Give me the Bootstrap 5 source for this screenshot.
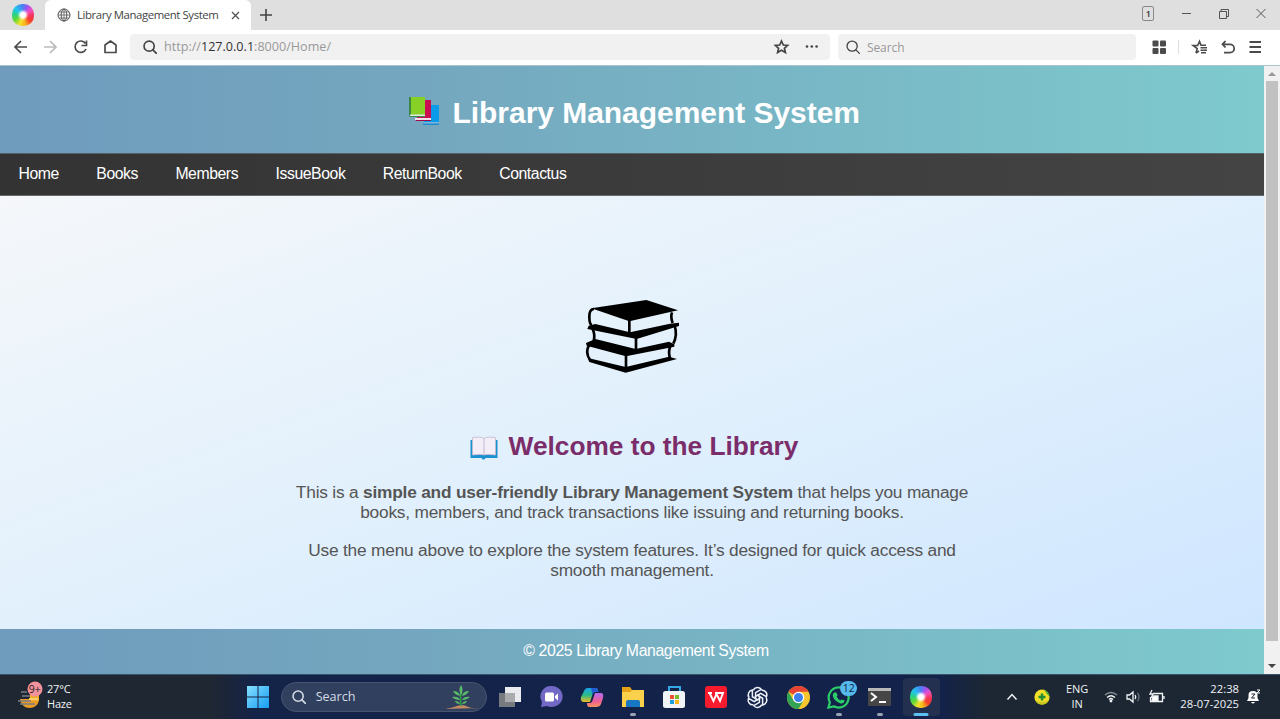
<!DOCTYPE html>
<html lang="en">
<head>
<meta charset="utf-8">
<meta name="viewport" content="width=device-width, initial-scale=1">
<title>Library Management System</title>
<link href="https://cdn.jsdelivr.net/npm/bootstrap@5.3.0/dist/css/bootstrap.min.css" rel="stylesheet">
<style>
  body{width:1280px;height:719px;font-family:"Liberation Sans",Arial,sans-serif;line-height:1}
  svg{display:block;flex:none;overflow:visible}
  .ui{font-family:"Open Sans","Noto Sans",sans-serif}
  .tabstrip{height:30px;background:#dfdfdf;color:#444}
  .logo-cell{width:45px}
  .swirl{width:22px;height:22px;border-radius:46%;background:radial-gradient(circle,#fff 0 2.5px,rgba(255,255,255,.3) 4.5px,transparent 6px),conic-gradient(#4a7df0,#a451f0 30deg,#f04fc0 60deg,#f5355a 95deg,#f5402a 130deg,#f9b01c 165deg,#f3e12a 200deg,#5ad83a 240deg,#27d08a 275deg,#21c4ee 310deg,#4a7df0)}
  .page-tab{width:206px;background:#fff;font-size:11.2px;color:#555;border-radius:6px 6px 0 0;padding-left:12px}
  .page-tab span{width:142px;margin:0 12px 0 6px;letter-spacing:-.42px;font-size:11.4px;color:#444;white-space:nowrap}
  .toolbar{height:35px;background:#fff;color:#4b4b4b;padding-bottom:1px}
  .field{height:26px;background:#f1f1f1;border-radius:4px;font-size:12.6px;color:#999}
  .address{width:700px;margin-left:13px;padding:0 11px 0 13px}
  .address b{font-weight:400;color:#333}
  .find{width:298px;margin-left:8px;padding-left:8px}
  .viewport{height:609px;border-top:1px solid #a9c2cb}
  .page{width:1264px}
  .banner{height:87px;background:linear-gradient(90deg,#6f9bbd,#74a7bf 33%,#7ecacd)}
  .banner h1{font-size:30px;letter-spacing:-.04px;color:#fff}
  .menu-bar{height:43px;background:linear-gradient(90deg,#333,#444);border-top:1px solid #566165;border-bottom:1px solid #656a6d;font-size:15.8px;letter-spacing:-.44px;padding:0 0 2px 18.5px;gap:37.4px}
  .menu-bar a{color:#fff}
  .welcome{height:433px;background:linear-gradient(160deg,#f5f7fa 0%,#e1f0fc 50%,#cfe6ff 100%);padding-top:94px}
  .welcome h2{font-size:26.25px;color:#7b2d6a;margin:53px 0 0 4px}
  .welcome p{font-size:17.3px;letter-spacing:-.2px;line-height:19.5px;color:#555;margin:0;white-space:nowrap}
  .page-foot{height:45px;background:linear-gradient(90deg,#6f9bbd,#74a7bf 33%,#7ecacd);color:#fff;font-size:15.8px;letter-spacing:-.38px;padding:0 0 1px 28px}
  .scroller{width:16px;background:#f1f1f1;padding:6px 2px}
  .thumb{height:560px;width:12px;background:#c1c1c1}
  .taskbar{height:45px;color:#f1f3f6;background:linear-gradient(90deg,#1f2732 0,#1f2732 210px,#142348 255px,#12224a 940px,#1c2733 985px,#1c2733);border-top:1px solid #36536a}
  .weather{width:237px;padding-left:17px;font-size:11px;gap:5px}
  .two-line{line-height:15px;padding-bottom:2px}
  .win-search{width:206px;height:30px;border-radius:15px;background:#31405f;border:1px solid #465470;padding:0 6px 0 10px;font-size:12.6px;color:#d5dbe5;margin:0 2.5px}
  .app{width:41.15px;height:38px}
  .app i{bottom:0;left:50%;width:6px;height:3px;border-radius:2px;background:#9aa3b4;transform:translateX(-50%)}
  .app.active{width:37px;margin-left:2px;background:#24304f;border-radius:4px}
  .app.active i{width:15px;background:#5cc0f5}
  .count{right:-7px;top:-5px;width:17px;height:15px;border-radius:8px;background:#56b9ee;color:#10233d;font-size:10.5px}
  .tray{padding-right:19px;font-size:11px}
</style>
</head>
<body class="overflow-hidden m-0">
<svg width="0" height="0" class="position-absolute">
  <defs>
    <symbol id="lens" viewBox="0 0 16 16"><g fill="none" stroke="currentColor" stroke-linecap="round"><circle cx="7" cy="7" r="5.800"/><path d="m11.300 11.300 4 4"/></g></symbol>
  </defs>
</svg>

<header class="ui">
  <div class="tabstrip d-flex align-items-stretch">
    <div class="logo-cell d-flex align-items-center justify-content-center"><div class="swirl"></div></div>
    <div class="page-tab d-flex align-items-center">
      <svg width="14" height="14" viewBox="0 0 14 14" fill="none" stroke="#555"><circle cx="7" cy="7" r="6"/><ellipse cx="7" cy="7" rx="2.800" ry="6"/><path d="M7 1v12M1 7h12M2 4h10M2 10h10" stroke-width=".8"/></svg>
      <span>Library Management System</span>
      <svg width="9" height="9" viewBox="0 0 9 9" stroke="#555" stroke-width="1.300"><path d="m1 1 7 7m0-7L1 8"/></svg>
    </div>
    <div class="d-flex align-items-center flex-grow-1 ps-2" style="padding-right:14px">
      <svg class="me-auto" style="margin-left:1px" width="12" height="12" viewBox="0 0 12 12" stroke="#444" stroke-width="1.600"><path d="M6 0v12M0 6h12"/></svg>
      <svg width="125" height="16" viewBox="0 0 125 16" fill="none" stroke="#555"><rect x="1.500" y="-.5" width="11" height="14" rx="1.500" stroke="#888"/><text x="4.700" y="10" fill="#333" stroke="none" font-size="9" font-weight="600">1</text><path d="M41 6.500h9M80 4V2.500h7.500v7H86M78.500 4.500h7v7h-7zM115.500 2l9 9m0-9-9 9"/></svg>
    </div>
  </div>
  <div class="toolbar d-flex align-items-center">
    <svg width="104" height="16" viewBox="0 0 104 16" style="margin-left:13px" fill="none" stroke="currentColor" stroke-width="1.700"><path d="M14 8H2m6-6L2 8l6 6"/><path d="M31 8h12m-6-6 6 6-6 6" stroke="#bbb"/><path d="M72.500 4.500A5.700 5.700 0 1 0 73 10M73.500 1.500v5h-5"/><path d="M92 13.500V6L97.500 2 103 6v7.500z" stroke-linejoin="round"/></svg>
    <div class="field address d-flex align-items-center">
      <svg width="14" height="14" stroke-width="1.900" color="#444"><use href="#lens"/></svg>
      <span style="margin-left:7px;padding-top:1px">http://<b>127.0.0.1</b>:8000/Home/</span>
      <svg class="ms-auto" width="45" height="16" viewBox="0 0 45 16"><path d="m7.500 2 1.800 4 4.300.4-3.200 2.900 1 4.200-3.900-2.200-3.900 2.200 1-4.200L1.400 6.400 5.700 6z" fill="none" stroke="#444" stroke-width="1.700"/><g fill="#444"><circle cx="33" cy="7.500" r="1.300"/><circle cx="37.800" cy="7.500" r="1.300"/><circle cx="42.600" cy="7.500" r="1.300"/></g></svg>
    </div>
    <div class="field find d-flex align-items-center gap-2">
      <svg width="14" height="14" stroke-width="1.500" color="#444"><use href="#lens"/></svg><span style="font-size:12px;letter-spacing:-.1px;margin-left:-1px;padding-top:1px">Search</span>
    </div>
    <svg width="112" height="16" viewBox="0 0 112 16" style="margin-left:16px" fill="none" stroke="#4b4b4b" stroke-width="1.800"><g fill="#4b4b4b" stroke="none"><rect y="1.500" x=".5" width="6" height="6" rx="1"/><rect x="8" y="1.500" width="6" height="6" rx="1"/><rect x=".5" y="9" width="6" height="6" rx="1"/><rect x="8" y="9" width="6" height="6" rx="1"/></g><path d="M26.500 1v14" stroke="#ddd" stroke-width="1"/><path d="m44 14 1.200-4.500-4-3h4.500L47.500 2.300l1.500 4H54M44 14l3-2M48.500 8.800h6.500M48.500 11.200h6.500M49 13.700h5" stroke-width="1.600"/><path d="M73.500 2 70.500 5.300 73.500 8.500M71 5.300H78a4.200 4.200 0 0 1 0 8.400H72M97.500 3h11.500M97.500 8h11.500M97.500 13h11.500"/></svg>
  </div>
</header>

<div class="viewport d-flex">
  <div class="page">
    <div class="banner d-flex align-items-center justify-content-center">
      <svg width="32" height="30" viewBox="0 0 32 30" style="margin:3px 12.500px 0 4px"><path d="M16 9h15v19H16z" fill="#0b9be8"/><path d="M16 26h15v2H15z" fill="#7db8dc"/><path d="M15 27.500h16v1.500H15z" fill="#2289ce"/><path d="M9 4h14v20H9z" fill="#cb0e52"/><path d="M7 22h16v2.500H7z" fill="#f2dfe9"/><path d="M7 24h16v1H8z" fill="#9d0b48"/><path d="M2 1h15v18H2z" fill="#87d026"/><path d="M1 1h2v19H1z" fill="#3c8648"/><path d="M2 18.500h15v1.500H2z" fill="#dceae6"/><path d="M1 20h16v1H2z" fill="#398844"/></svg>
      <h1 class="fw-bold m-0 lh-1" style="padding-top:6px">Library Management System</h1>
    </div>
    <nav class="menu-bar d-flex align-items-center">
      <a class="text-decoration-none" href="#">Home</a><a class="text-decoration-none" href="#">Books</a><a class="text-decoration-none" href="#">Members</a><a class="text-decoration-none" href="#">IssueBook</a><a class="text-decoration-none" href="#">ReturnBook</a><a class="text-decoration-none" href="#">Contactus</a>
    </nav>
    <main class="welcome d-flex flex-column align-items-center text-center">
      <svg width="125" height="90" viewBox="0 15 375 270">
        <path d="M64 70 229 45 324 76 178 109zM56 122l20-5 104 25 120-26 27-3v10L200 162 52 132zM48 174l28-12 121 30 100-22 16 8v7L168 214 50 182zM54 219l113 27 130-31 24 7-154 41L58 231z"/>
        <path d="M72 72Q58 72 58 95t8 25M178 105v42M306 82q-5 14 2 32M68 132q8 18 3 36M198 156v42M314 122q9 28-4 54M58 179q-14 22 2 46M168 210v42M301 184q-7 16-1 36" fill="none" stroke="#000" stroke-width="8"/>
      </svg>
      <h2 class="fw-bold d-flex align-items-center lh-1">
        <svg width="28" height="24" viewBox="0 0 28 24" style="margin:3px 11px 0 0"><path d="M.5 4h27v18h-12l-1 1.500h-2L11.500 22H.5z" fill="#1c91cf"/><path d="M2.500 1.500q9-1 11.500 1 2.500-2 11.500-1V19q-9-1-11.500 0-2.500-1-11.500 0z" fill="#f3edf7" stroke="#c3b9ce" stroke-width=".8"/><path d="M14 2.500V19" stroke="#c0b8d0"/></svg>
        Welcome to the Library</h2>
      <p style="margin-top:23px">This is a <strong>simple and user-friendly Library Management System</strong> that helps you manage<br>books, members, and track transactions like issuing and returning books.</p>
      <p style="margin-top:19px">Use the menu above to explore the system features. It’s designed for quick access and<br>smooth management.</p>
    </main>
    <footer class="page-foot d-flex align-items-center justify-content-center">© 2025 Library Management System</footer>
  </div>
  <div class="scroller d-flex flex-column align-items-center">
    <svg width="8" height="4" viewBox="0 0 8 4"><path d="m0 4 4-4 4 4" fill="#999"/></svg>
    <div class="thumb" style="margin-top:5px"></div>
    <svg class="mt-auto" width="8" height="4" viewBox="0 0 8 4"><path d="m0 0 4 4 4-4" fill="#444"/></svg>
  </div>
</div>

<footer class="taskbar ui d-flex align-items-center">
  <div class="weather d-flex align-items-center">
    <svg width="25" height="30" viewBox="0 0 25 30" style="margin-bottom:3px"><path d="M3 18h19c0 6-5 9-9.500 9S4 24 3 18z" fill="#ed9b27"/><path d="M13 14h9v6h-9z" fill="#f5ab2c"/><path d="M4 11h6M5 15h8M1 20h13M3 23h15" stroke="#777e86" stroke-width="1.600"/><path d="M12 18h9" stroke="#fad168" stroke-width="2"/><circle cx="18" cy="8" r="7.500" fill="#f4919c"/><text x="11.800" y="12" font-size="10.500" fill="#222">9+</text></svg>
    <div class="two-line" style="letter-spacing:-.2px">27°C<br>Haze</div>
  </div>
  <div class="app d-flex align-items-center justify-content-center"><svg width="22" height="22" viewBox="0 0 22 22"><defs><linearGradient id="wg" x2="1" y2="1"><stop stop-color="#86dfff"/><stop offset="1" stop-color="#159df3"/></linearGradient></defs><path d="M0 0h10.500v10.500H0zM11.500 0H22v10.500H11.500zM0 11.500h10.500V22H0zM11.500 11.500H22V22H11.500z" fill="url(#wg)"/></svg></div>
  <div class="win-search d-flex align-items-center">
    <svg width="14" height="14" stroke-width="1.800"><use href="#lens"/></svg><span style="margin-left:10px">Search</span>
    <svg class="ms-auto" width="36" height="26" viewBox="0 0 36 26"><path d="M1 25q7-1 12-3 5-2 9 0 6 3 13 2z" fill="#c28a62"/><path d="M17 22q-1-8 0-13" stroke="#2f9a48" stroke-width="1.600" fill="none"/><path d="M17 11q-3-5 0-10 3 5 0 10M16 12q-5-1-7-5 6 0 7 5M18 12q5-1 7-5-6 0-7 5M16 16q-5 0-8-3 6-1 8 3M18 16q5 0 8-3-6-1-8 3M16 20q-4 0-5-3 4 0 5 3M18 20q4 0 5-3-4 0-5 3" fill="#5bbd69"/></svg>
  </div>
  <div class="app d-flex align-items-center justify-content-center"><svg width="24" height="22" viewBox="0 0 24 22"><path d="M7 1h16v15H7z" fill="#e9ebee"/><path d="M1 7h16v14H1z" fill="#777a7e"/><path d="M7 7h10v9H7z" fill="#a9abad"/></svg></div>
  <div class="app d-flex align-items-center justify-content-center"><svg width="22" height="22" viewBox="0 0 22 22"><path d="M11 0a11 10.500 0 1 1-4 20l-6 1 1-5A10.500 10.500 0 0 1 11 0" fill="#7268c5"/><rect x="5" y="6.500" width="9" height="9" rx="1.500" fill="#fff"/><path d="m15 10 3-2.500v7L15 12z" fill="#fff"/></svg></div>
  <div class="app d-flex align-items-center justify-content-center"><svg width="22" height="21" viewBox="0 0 22 21"><defs><linearGradient id="cl" x2="0" y2="1"><stop stop-color="#19a4ef"/><stop offset=".5" stop-color="#27b989"/><stop offset="1" stop-color="#f2bc22"/></linearGradient><linearGradient id="cr" x2="0" y2="1"><stop stop-color="#b76af1"/><stop offset=".6" stop-color="#ef5f91"/><stop offset="1" stop-color="#f6965e"/></linearGradient></defs><path d="M15 20H8q-2 0-2-4h3q2 0 3-4l2-6h6q3 0 2 5l-2 6q-1 3-5 3" fill="url(#cr)"/><path d="M7 1h8q2 0 2 4h-3q-2 0-3 4l-2 6H3q-4 0-3-5l3-6q1-3 4-3" fill="url(#cl)"/><path d="M10 1h5q2 0 2.500 4H14q-2 0-2.500 3z" fill="#225ed1"/></svg></div>
  <div class="app d-flex align-items-center justify-content-center position-relative"><svg width="24" height="22" viewBox="0 0 24 22"><path d="M1 1h8l2 3h12v17H1z" fill="#e6a317"/><path d="M1 6h8l3-2h11v17H1z" fill="#fbd04a"/><path d="M5 21v-5q0-2 2-2h10q2 0 2 2v5z" fill="#1677c5"/></svg><i class="position-absolute"></i></div>
  <div class="app d-flex align-items-center justify-content-center"><svg width="22" height="23" viewBox="0 0 22 23"><path d="M6 6V1h11v5" stroke="#34a8e7" stroke-width="2" fill="none"/><rect y="5" width="22" height="17" rx="2.500" fill="#f1f4f7"/><path d="M7 9h4v4H7z" fill="#ee5132"/><path d="M12 9h4v4h-4z" fill="#7db928"/><path d="M7 14h4v4H7z" fill="#19a0df"/><path d="M12 14h4v4h-4z" fill="#f6b51c"/></svg></div>
  <div class="app d-flex align-items-center justify-content-center"><svg width="22" height="22" viewBox="0 0 22 22" style="margin-left:2px"><rect width="22" height="22" rx="3" fill="#f61b2d"/><path d="M3 7h4M4.500 7l4 8 3-7 3.500 7 3-8h-8" fill="none" stroke="#fff" stroke-width="1.900"/></svg></div>
  <div class="app d-flex align-items-center justify-content-center"><svg width="23" height="23" viewBox="-12 -12 24 24" fill="none" stroke="#edf0f6" stroke-width="1.600" style="margin-left:1px"><g id="knot"><path id="arm" d="M-4.500-7.500A5 5 0 0 1 4-8.500L-2-5V2M4-8.500l-1 .5"/><use href="#arm" transform="rotate(60)"/><use href="#arm" transform="rotate(120)"/></g><use href="#knot" transform="rotate(180)"/></svg></div>
  <div class="app d-flex align-items-center justify-content-center"><svg width="23" height="23" viewBox="0 0 24 24" style="margin-left:1px"><circle cx="12" cy="12" r="12" fill="#fac62d"/><path d="M12 12 1.600 6A12 12 0 0 1 22.400 6H12z" fill="#e54435"/><path d="M1.600 6A12 12 0 0 0 12 24l5.200-9L12 12 6.800 15z" fill="#33a456"/><circle cx="12" cy="12" r="6" fill="#fff"/><circle cx="12" cy="12" r="4.700" fill="#3d7fed"/></svg></div>
  <div class="app d-flex align-items-center justify-content-center position-relative"><div class="position-relative"><svg width="23" height="23" viewBox="0 0 24 24"><path d="M12 1.500a10.500 10.500 0 1 1-5 19.700L1.500 22.500 3 17A10.500 10.500 0 0 1 12 1.500z" fill="none" stroke="#2ccd68" stroke-width="2.300"/><path d="M8 6.500 10 7l1 3-1 1q1 2.500 4 4l1.500-1 3 1q-1 4-5 3Q7 15.500 6 10q0-2.500 2-3.500" fill="#2ccd68"/></svg><span class="count position-absolute d-flex align-items-center justify-content-center">12</span></div><i class="position-absolute"></i></div>
  <div class="app d-flex align-items-center justify-content-center position-relative"><svg width="23" height="18" viewBox="0 0 23 18"><rect width="23" height="18" rx="1" fill="#464646"/><path d="M0 0h23v3H0z" fill="#b9b9b9"/><path d="m3 5 5 4-5 4M11 14h7" stroke="#fff" stroke-width="2" fill="none"/></svg><i class="position-absolute"></i></div>
  <div class="app active d-flex align-items-center justify-content-center position-relative"><div class="swirl"></div><i class="position-absolute"></i></div>
  <div class="tray d-flex align-items-center ms-auto">
    <svg width="12" height="8" viewBox="0 0 12 8" fill="none" stroke="currentColor" stroke-width="1.500"><path d="m1.500 6.500 4.500-5 4.500 5"/></svg>
    <svg width="16" height="16" viewBox="0 0 16 16" style="margin-left:16px"><circle cx="8" cy="8" r="7.600" fill="#f4de27"/><path d="M1 11A7.600 7.600 0 0 0 15 11Q8 15 1 11" fill="#c8c720"/><path d="M10 .8Q15 3 15.600 8L13 5z" fill="#38a83b"/><path d="M8 4.500v7M4.500 8h7" stroke="#218e34" stroke-width="2.500"/></svg>
    <div class="two-line text-center" style="width:54px;letter-spacing:-.1px">ENG<br>IN</div>
    <svg width="62" height="16" viewBox="0 0 62 16" fill="none" stroke="currentColor" stroke-width="1.300"><path d="M1 6Q7 1 13 6" stroke="#8c929b"/><path d="M3 8.500Q7 5 11 8.500M5 10.500q2-2 4 0"/><circle cx="7" cy="12" r=".8" fill="#fff"/><path d="M23 6h2.500L29 3v10l-3.500-3H23zM31 6q1.500 2 0 4"/><path d="M33.500 4q3 4 0 8" stroke="#69717b"/><path d="M49 4.500h9.500v8H46.500V8M60 7v3"/><path d="M49 7h5v4.500h-6z" fill="#fff"/><path d="m48 1-2 4h3l-2 4"/></svg>
    <div class="two-line text-end" style="width:73px;font-size:11.25px">22:38<br>28-07-2025</div>
    <svg width="14" height="16" viewBox="0 0 14 16" style="margin-left:8px"><path d="M0 12 1.500 9V6Q1.500 2 6 2t4.500 4v3l1.500 3zM4 13h4q-2 3-4 0" fill="#fff"/><path d="M4.500 5h3.500l-3.500 4H8" stroke="#1c2733" fill="none"/><path d="M10 1h3l-3 3h3" stroke="#fff" fill="none"/></svg>
  </div>
</footer>
<script src="https://cdn.jsdelivr.net/npm/bootstrap@5.3.0/dist/js/bootstrap.bundle.min.js"></script>
</body>
</html>
